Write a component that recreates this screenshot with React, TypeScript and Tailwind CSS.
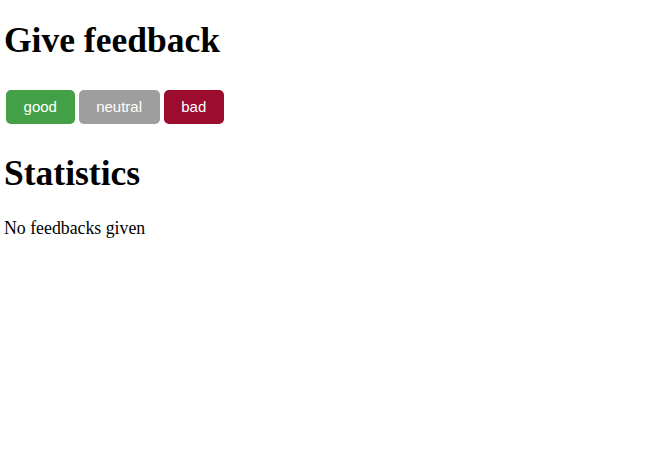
const Button = ({ label, className }: { label: string; className: string }) => (
  <button
    className={`m-[2px] h-[34px] rounded-[5px] px-[17.6px] text-[15px] text-white ${className}`}
    style={{ fontFamily: '"Liberation Sans", Arial, sans-serif' }}
  >
    {label}
  </button>
)

const App = () => {
  return (
    <div
      className="min-h-[472px] w-full bg-white px-[4px] text-black"
      style={{ fontFamily: '"Liberation Serif", "Times New Roman", serif' }}
    >
      <h1 className="pt-[20px] text-[35.5px] font-bold leading-[41px]">Give feedback</h1>
      <div className="mt-[27px] flex">
        <Button label="good" className="bg-[#43a047]" />
        <Button label="neutral" className="bg-[#9e9e9e]" />
        <Button label="bad" className="bg-[#9c0c2e]" />
      </div>
      <h1 className="mt-[27px] text-[35.5px] font-bold leading-[41px]">Statistics</h1>
      <p className="mt-[24px] text-[17.8px] leading-[20px]">No feedbacks given</p>
    </div>
  )
}

export default App
